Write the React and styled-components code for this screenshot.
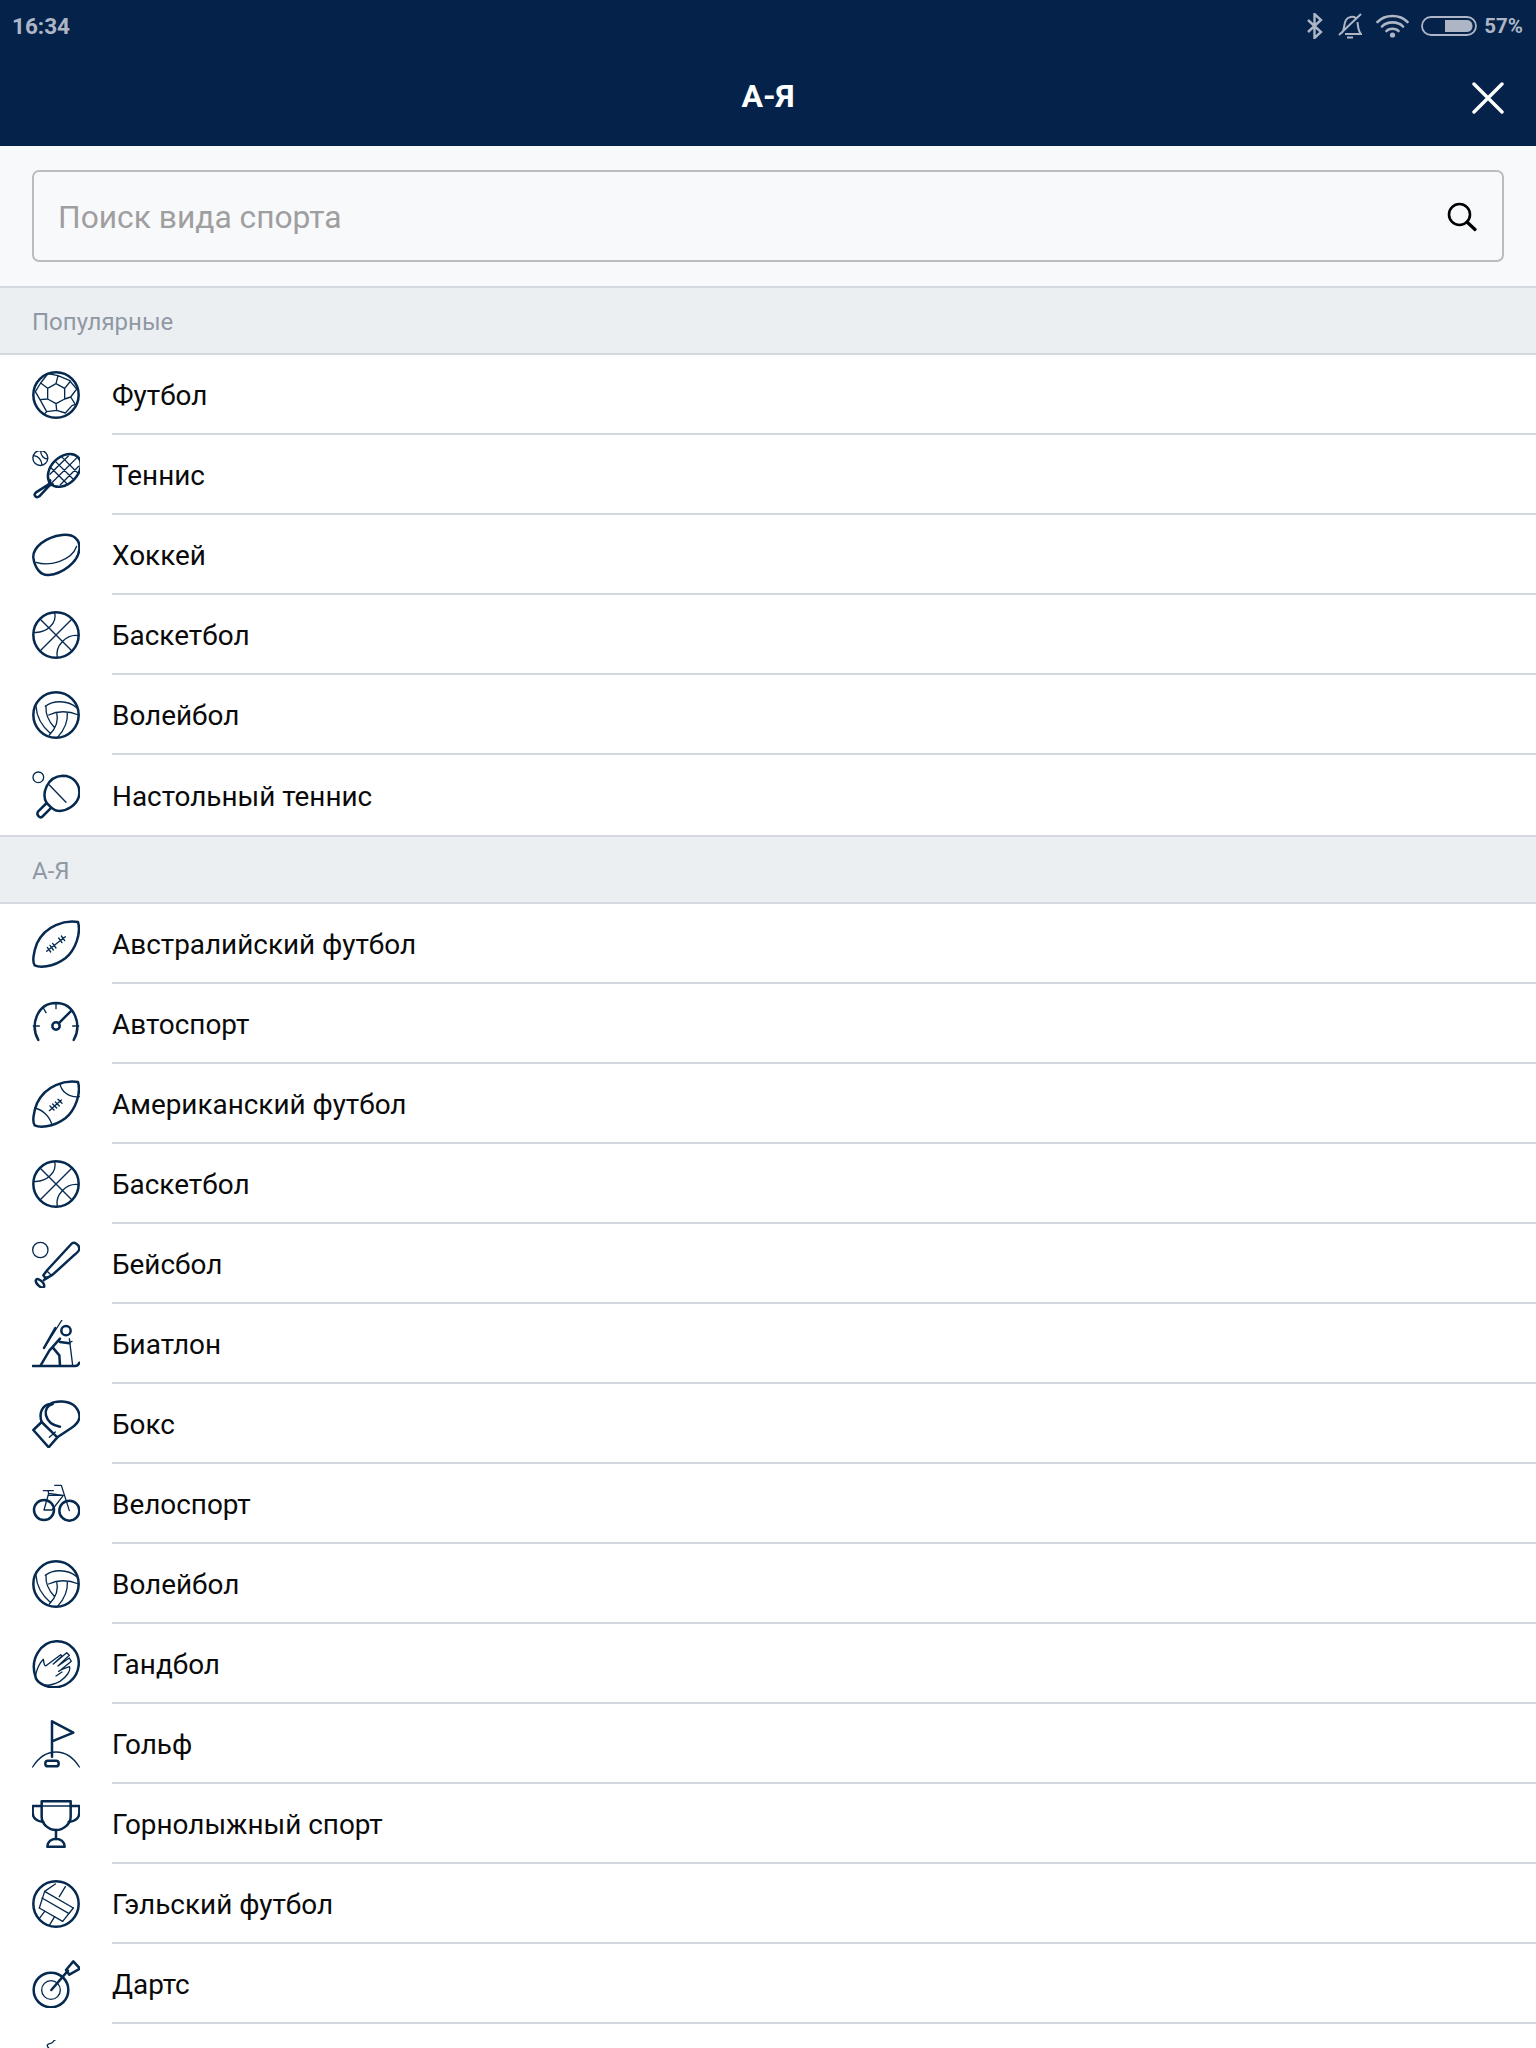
import React from 'react';
import styled, { createGlobalStyle } from 'styled-components';

const Global = createGlobalStyle`
  html, body { margin: 0; padding: 0; background: #fff; height: 2048px; overflow: hidden; }
  body { font-family: Roboto, "Liberation Sans", sans-serif; }
  * { box-sizing: border-box; }
`;

const Page = styled.div`
  width: 1536px;
  height: 2048px;
  overflow: hidden;
  display: flex;
  flex-direction: column;
  background: #fff;
`;
const Header = styled.header`
  background: #05234a;
  flex: none;
  height: 146px;
  display: flex;
  flex-direction: column;
`;
const StatusBar = styled.div`
  height: 51px;
  padding: 0 13px 0 12px;
  display: flex;
  align-items: center;
  justify-content: space-between;
  color: #aeb6c6;
`;
const Time = styled.span`
  font-size: 22.5px;
  font-weight: 700;
`;
const StatusIcons = styled.div`
  display: flex;
  align-items: center;
  gap: 0;
`;
const Pct = styled.span`
  font-size: 20.5px;
  font-weight: 700;
  margin-left: 7px;
`;
const StatusSvg = styled.svg`
  display: block;
  margin-left: ${p => p.$gap || 0}px;
`;
const Toolbar = styled.div`
  flex: 1;
  display: grid;
  grid-template-columns: 1fr auto 1fr;
  align-items: center;
  padding: 0 32px 6px;
`;
const Title = styled.h1`
  grid-column: 2;
  margin: 0;
  color: #fff;
  font-size: 32px;
  font-weight: 700;
`;
const CloseButton = styled.button`
  grid-column: 3;
  justify-self: end;
  padding: 0;
  border: 0;
  background: none;
  width: 32px;
  height: 32px;
  display: block;
  margin-top: 4px;
`;
const SearchPanel = styled.div`
  flex: none;
  height: 140px;
  padding: 24px 32px 0;
  background: #f8f9fb;
`;
const SearchBox = styled.div`
  height: 92px;
  border: 2px solid #b9bdc2;
  border-radius: 7px;
  display: flex;
  align-items: center;
  justify-content: space-between;
  padding: 2px 25px 0 24px;
`;
const Placeholder = styled.span`
  font-size: 31.75px;
  color: #9f9f9f;
  margin-top: 1px;
`;
const SectionHeader = styled.div`
  flex: none;
  height: 69px;
  background: #ecEff2;
  border-top: 2px solid #d3d9de;
  border-bottom: 2px solid #d3d9de;
  padding: 2px 32px 0;
  display: flex;
  align-items: center;
  font-size: 24px;
  color: #8f98a4;
`;
const List = styled.ul`
  list-style: none;
  margin: 0;
  padding: 0;
  flex: none;
`;
const Row = styled.li`
  height: 80px;
  padding-left: 32px;
  display: flex;
  align-items: center;
  gap: 32px;
`;
const Label = styled.div`
  flex: 1;
  height: 80px;
  display: flex;
  align-items: center;
  font-size: 27.9px;
  color: #0a0a0a;
  border-bottom: ${p => (p.$last ? 'none' : '2px solid #d3d8de')};
  padding-top: 2px;
`;
const IconSvg = styled.svg`
  display: block;
  flex: none;
  width: 48px;
  height: 48px;
  fill: none;
  stroke: #05294f;
  stroke-width: 7.5;
  stroke-linecap: round;
  stroke-linejoin: round;
  .t { stroke-width: 4; }
  .f { fill: #05294f; }
`;

const Ball = () => <circle cx="72" cy="72" r="68" />;

const Icons = {
  football: (
    <>
      <Ball />
      <path className="t" d="M47 52 L72 38 L98 52 L98 84 L72 98 L47 84 Z M47 52 L26 36 M98 52 L116 30 M72 38 L78 14 L48 8 L26 36 L10 62 L24 86 L47 84 M78 14 L112 28 L134 54 L116 78 L98 84 M116 78 L130 100 M72 98 L74 118 L100 126 L120 104 L130 100 M74 118 L44 122 L24 86 M44 122 L36 130" />
    </>
  ),
  tennis: (
    <>
      <circle className="t" cx="25" cy="21" r="22.5" />
      <path className="t" d="M6 14 C18 16 28 26 30 42 M26 0 C26 14 36 24 46 24" />
      <g transform="rotate(-45 97 58)">
        <ellipse cx="97" cy="58" rx="57" ry="40" />
        <path className="t" d="M58 36 H136 M42 58 H152 M58 80 H136 M74 24 V92 M97 19 V97 M120 24 V92" />
      </g>
      <path d="M55 88 L50 100 L12 124 C3 132 12 144 22 136 L52 104 L62 100" />
    </>
  ),
  hockey: (
    <>
      <path d="M4 80 C2 50 40 18 90 12 C125 8 145 25 142 55 C138 95 90 128 50 132 C25 134 8 110 4 80 Z" />
      <path className="t" d="M12 94 C50 106 118 92 134 46" />
    </>
  ),
  basketball: (
    <>
      <Ball />
      <path className="t" d="M24 24 L120 120 M120 24 L24 120 M68 4 C76 36 44 68 4 64 M140 74 C104 68 68 104 76 140" />
    </>
  ),
  volleyball: (
    <>
      <Ball />
      <path className="t" d="M40 46 C62 28 106 26 134 50 M42 44 C40 70 50 92 68 110 M12 46 C14 80 32 108 56 128 M50 72 C76 60 110 60 140 72 M106 64 C108 90 96 118 76 140 M74 64 C80 88 72 112 52 132" />
    </>
  ),
  pingpong: (
    <>
      <circle className="t" cx="19" cy="19" r="16" />
      <path d="M44 96 C28 70 44 16 92 14 C124 14 144 40 142 68 C140 100 102 126 70 118 L58 110" />
      <path className="t" d="M52 42 L102 94" />
      <path d="M44 96 L58 110 L30 138 C24 142 12 132 18 122 Z" />
    </>
  ),
  aussie: (
    <>
      <path d="M138 6 C100 0 40 15 15 70 C5 95 0 125 8 136 C20 142 60 145 100 115 C130 90 148 40 138 6 Z" />
      <path className="t" d="M44 94 L100 50 M46 82 L56 96 M54 76 L64 90 M62 70 L72 84 M80 54 L90 68 M88 48 L98 62" />
    </>
  ),
  auto: (
    <>
      <path d="M19 120 C-6 76 14 10 72 9 C130 10 150 76 125 120" />
      <circle cx="72" cy="78" r="11" />
      <path d="M80 70 L116 34" />
      <path className="t" d="M72 10 V26 M34 24 L42 38 M4 78 H22 M122 78 H140" />
    </>
  ),
  american: (
    <>
      <path d="M138 6 C100 0 40 15 15 70 C5 95 0 125 8 136 C20 142 60 145 100 115 C130 90 148 40 138 6 Z" />
      <path className="t" d="M84 10 C86 32 110 54 142 50 M8 84 C34 90 54 110 60 136" />
      <path className="t" d="M52 92 L88 60 M54 78 L66 90 M62 72 L74 84 M70 66 L82 78 M78 58 L90 70" />
    </>
  ),
  baseball: (
    <>
      <circle className="t" cx="25" cy="30" r="23" />
      <path d="M118 12 C126 3 142 14 142 26 C142 32 136 38 128 44 L62 104 L42 116 L34 106 L46 90 Z" />
      <ellipse cx="24" cy="130" rx="16" ry="8" transform="rotate(45 24 130)" />
      <path d="M36 120 L46 112" />
      <path d="M44 92 L58 106" className="t" />
    </>
  ),
  biathlon: (
    <>
      <path d="M2 138 H130 C136 138 140 134 142 128" />
      <circle cx="102" cy="32" r="14" />
      <path d="M90 0 L36 84" className="t" />
      <path d="M70 24 L36 84" />
      <path d="M84 56 L52 92 L26 136 M62 82 L82 106 L84 136 M84 66 L112 70" />
      <path className="t" d="M112 56 L122 136 M106 70 L120 64" />
    </>
  ),
  boxing: (
    <>
      <path d="M4 90 L29 66 L76 112 L50 142 Z" />
      <path d="M29 66 C20 40 30 16 54 12 C70 2 110 0 130 20 C150 44 146 66 118 84 L76 112" />
      <path d="M62 12 C46 16 38 30 42 46 C46 62 60 76 84 80" />
      <path d="M52 112 L70 96" className="t" />
    </>
  ),
  bike: (
    <>
      <circle cx="36" cy="90" r="30" />
      <circle cx="112" cy="92" r="30" />
      <path className="t" d="M36 90 L50 40 L94 46 L60 90 Z M34 32 H64 M48 32 L50 40 M68 16 H88 L112 92 M94 46 L48 46" />
    </>
  ),
  handball: (
    <>
      <path d="M10 108 C-6 60 24 6 72 4 C116 2 144 40 140 76 C136 116 102 142 66 142 C38 142 12 126 10 108 Z" />
      <path className="t" d="M10 108 C14 90 22 70 34 58 C36 72 38 82 44 76 L86 44 L90 48 L64 72 L104 38 L112 46 L78 78 L112 54 L118 64 L86 90 L112 80 C118 92 102 112 84 124 C64 134 42 142 26 130 M80 94 L96 84 M72 108 L90 96" />
    </>
  ),
  golf: (
    <>
      <path d="M60 110 V4 L124 38 L60 64" />
      <rect x="40" y="122" width="40" height="17" rx="8" />
      <path className="t" d="M2 141 C20 112 44 96 72 96 C100 96 124 112 142 141" />
    </>
  ),
  trophy: (
    <>
      <path d="M29 4 H116 V50 C116 72 94 90 72 90 C50 90 29 72 29 50 Z" />
      <path className="t" d="M29 18 H116" />
      <path d="M29 18 H2 V38 C2 56 18 64 34 66 M116 18 H142 V38 C142 56 126 64 110 66" />
      <path d="M72 90 V118 M46 140 C46 126 58 116 72 116 C86 116 98 126 98 140 Z" />
    </>
  ),
  gaelic: (
    <>
      <Ball />
      <path d="M38 34 L124 84 M30 54 L110 100 M22 84 L92 124" className="t" />
      <path d="M70 12 L38 34 M100 20 L82 50 M38 94 L20 118 M68 110 L52 136 M38 34 L22 84 M124 84 L92 124" className="t" />
    </>
  ),
  darts: (
    <>
      <circle cx="57" cy="90" r="52" />
      <circle className="t" cx="57" cy="90" r="28" />
      <path d="M58 90 L108 32" />
      <path d="M102 30 L124 4 L144 26 L112 44 Z" />
    </>
  ),
  next: <path d="M74 -3 C60 3 66 8 56 10 C46 12 42 16 50 24" className="t" />,
};

const popular = [
  ['football', 'Футбол'],
  ['tennis', 'Теннис'],
  ['hockey', 'Хоккей'],
  ['basketball', 'Баскетбол'],
  ['volleyball', 'Волейбол'],
  ['pingpong', 'Настольный теннис'],
];
const all = [
  ['aussie', 'Австралийский футбол'],
  ['auto', 'Автоспорт'],
  ['american', 'Американский футбол'],
  ['basketball', 'Баскетбол'],
  ['baseball', 'Бейсбол'],
  ['biathlon', 'Биатлон'],
  ['boxing', 'Бокс'],
  ['bike', 'Велоспорт'],
  ['volleyball', 'Волейбол'],
  ['handball', 'Гандбол'],
  ['golf', 'Гольф'],
  ['trophy', 'Горнолыжный спорт'],
  ['gaelic', 'Гэльский футбол'],
  ['darts', 'Дартс'],
  ['next', ''],
];

const SportList = ({ items, lastFlat }) => (
  <List>
    {items.map(([icon, name], i) => (
      <Row key={name + i}>
        <IconSvg viewBox="0 0 144 144" aria-hidden="true">{Icons[icon]}</IconSvg>
        <Label $last={lastFlat && i === items.length - 1}>{name}</Label>
      </Row>
    ))}
  </List>
);

export default function App() {
  return (
    <Page>
      <Global />
      <Header>
        <StatusBar>
          <Time>16:34</Time>
          <StatusIcons>
            <StatusSvg width="18" height="26" viewBox="0 0 18 26" fill="none" stroke="#aeb6c6" strokeWidth="2.4">
              <path d="M2 7 L15 19 L8.5 25 V1 L15 7 L2 19" />
            </StatusSvg>
            <StatusSvg $gap={14} width="24" height="26" viewBox="0 0 24 26" fill="none" stroke="#aeb6c6" strokeWidth="2">
              <path d="M4 20 C7 16 5.5 11 8 7 C10 3.5 15 3 18 5 M19.5 9 C20 13 20 18 23 21 H7 M9 24.5 H15 M1 22 L23 1" />
            </StatusSvg>
            <StatusSvg $gap={14} width="33" height="24" viewBox="0 0 33 24" fill="none" stroke="#aeb6c6" strokeWidth="2.6" strokeLinecap="round">
              <path d="M1.5 8 C9 0 24 0 31.5 8 M6 12.5 C11 7 22 7 27 12.5 M10.5 17 C13 14 20 14 22.5 17" />
              <circle cx="16.5" cy="21" r="2.6" fill="#aeb6c6" stroke="none" />
            </StatusSvg>
            <StatusSvg $gap={12} width="56" height="20" viewBox="0 0 56 20" fill="none">
              <rect x="1" y="1" width="54" height="18" rx="9" stroke="#aeb6c6" strokeWidth="1.8" />
              <path d="M24 4 H46 C49.5 4 51.5 7 51.5 10 C51.5 13 49.5 16 46 16 H24 Z" fill="#aeb6c6" />
            </StatusSvg>
            <Pct>57%</Pct>
          </StatusIcons>
        </StatusBar>
        <Toolbar>
          <Title>А-Я</Title>
          <CloseButton aria-label="Закрыть">
            <svg width="32" height="32" viewBox="0 0 32 32" fill="none" stroke="#fff" strokeWidth="3.4" strokeLinecap="round">
              <path d="M2 2 L30 30 M30 2 L2 30" />
            </svg>
          </CloseButton>
        </Toolbar>
      </Header>
      <SearchPanel>
        <SearchBox>
          <Placeholder>Поиск вида спорта</Placeholder>
          <svg width="30" height="30" viewBox="0 0 30 30" fill="none" stroke="#000" strokeWidth="2.6" strokeLinecap="round">
            <circle cx="12.5" cy="12.5" r="10.5" />
            <path d="M20 20 L28 27.5" strokeWidth="3.2" />
          </svg>
        </SearchBox>
      </SearchPanel>
      <SectionHeader>Популярные</SectionHeader>
      <SportList items={popular} lastFlat />
      <SectionHeader>А-Я</SectionHeader>
      <SportList items={all} />
    </Page>
  );
}
